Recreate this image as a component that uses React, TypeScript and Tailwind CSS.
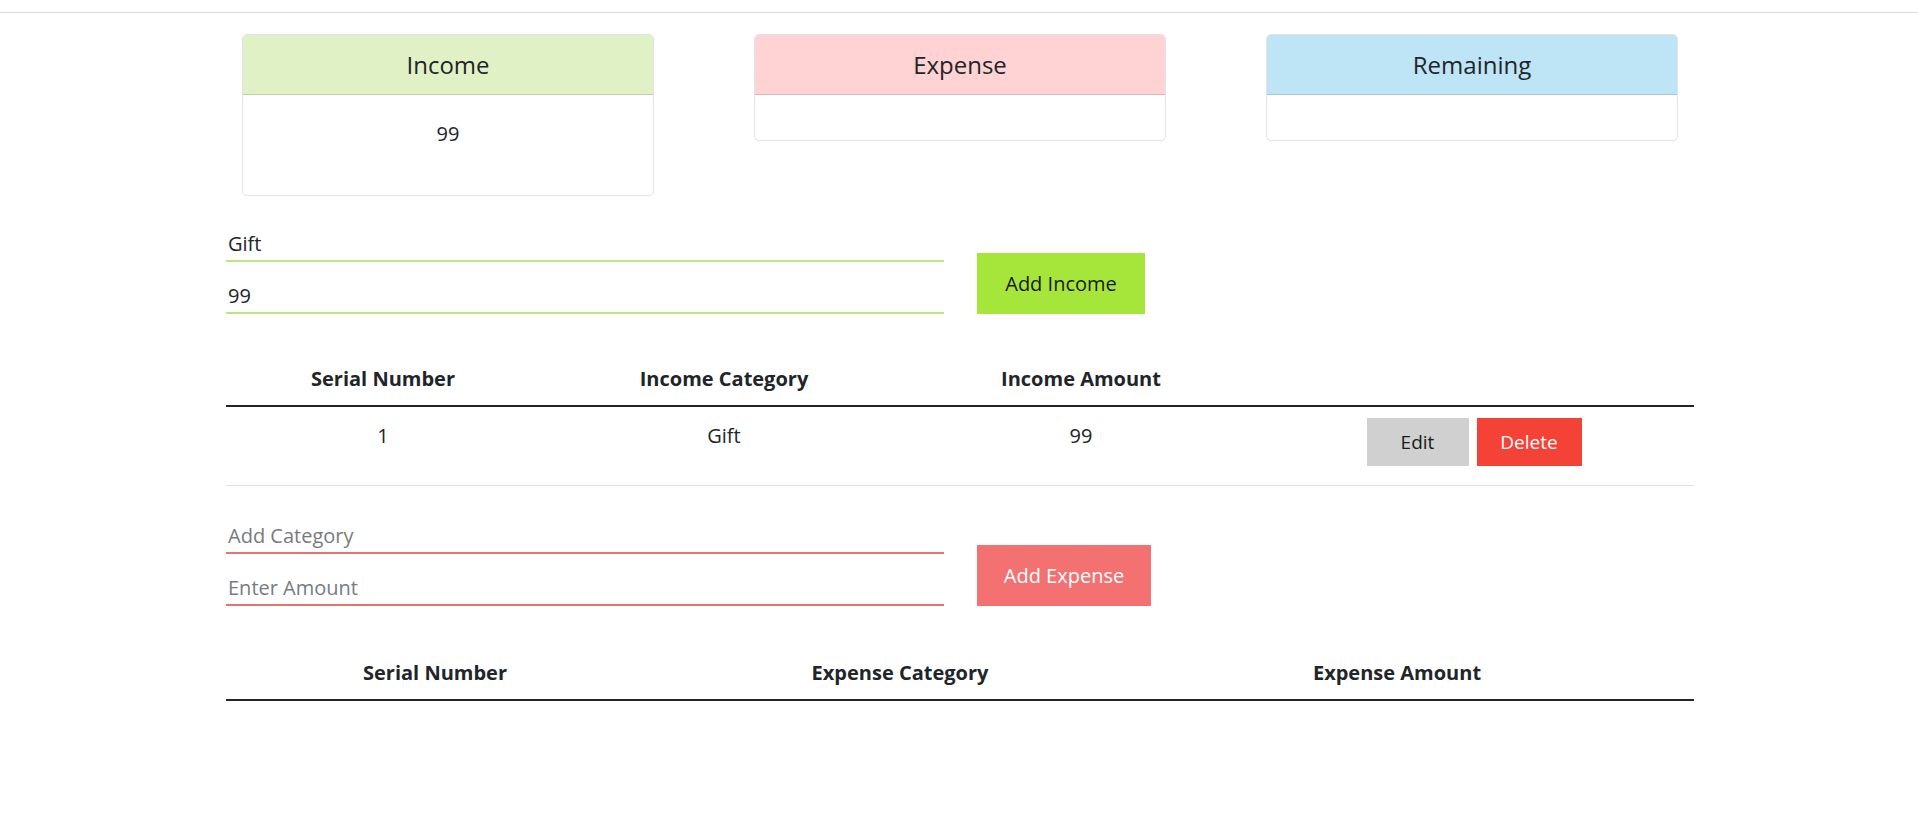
import React from "react";

/* ---- Summary cards ---- */

function SummaryCard({ title, head, value, bodyH }: { title: string; head: string; value?: string; bodyH: string }) {
  return (
    <div className="w-[412px] rounded-[5px] border border-[#dfe2e6] overflow-hidden bg-white">
      <div className={`h-[60px] flex items-center justify-center border-b border-[rgba(0,0,0,0.13)] ${head}`}>
        <span className="text-[24px] text-[#212529]">{title}</span>
      </div>
      <div className={`${bodyH} text-center pt-[24px] leading-[30px] text-[20px] text-[#212529]`}>{value}</div>
    </div>
  );
}

/* ---- Form with two underlined inputs and a button ---- */

function EntryForm({
  cat,
  amt,
  line,
  button,
  buttonCls,
}: {
  cat: string;
  amt: string;
  line: string;
  button: string;
  buttonCls: string;
}) {
  const inputCls = `block w-[718px] h-[36px] pl-[2px] border-b-2 ${line} text-[20px] text-[#212529] outline-none bg-transparent placeholder:text-[#777b80]`;
  return (
    <div className="flex items-end gap-[33px]">
      <div className="flex flex-col gap-[16px]">
        <input className={inputCls} defaultValue={cat} placeholder="Add Category" />
        <input className={inputCls} defaultValue={amt} placeholder="Enter Amount" />
      </div>
      <button className={`h-[61px] text-[20px] ${buttonCls}`}>{button}</button>
    </div>
  );
}

export default function App() {
  return (
    <div className="min-h-screen bg-white font-['Open_Sans','Noto_Sans',sans-serif] text-[#212529]">
      <div className="h-[13px] border-b border-[#dcdcdc]" />

      <div className="w-[1468px] mx-auto translate-x-[1px]">
        {/* cards */}
        <div className="flex justify-between items-start px-[16px] pt-[21px]">
          <SummaryCard title="Income" head="bg-[#e0f2c5]" value="99" bodyH="h-[100px]" />
          <SummaryCard title="Expense" head="bg-[#ffd3d4]" bodyH="h-[45px]" />
          <SummaryCard title="Remaining" head="bg-[#bee5f6]" bodyH="h-[45px]" />
        </div>

        {/* income form */}
        <div className="pt-[30px]">
          <EntryForm
            cat="Gift"
            amt="99"
            line="border-[#bfe67c]"
            button="Add Income"
            buttonCls="w-[168px] bg-[#a6e63b] text-[#1a1a1a]"
          />
        </div>

        {/* income table */}
        <div className="mt-[39px]">
          <div className="grid grid-cols-[314px_368px_346px_1fr] h-[54px] items-center text-center text-[20px] font-bold border-b-2 border-[#212529]">
            <div>Serial Number</div>
            <div>Income Category</div>
            <div>Income Amount</div>
            <div />
          </div>
          <div className="grid grid-cols-[314px_368px_346px_1fr] h-[79px] items-start pt-[11px] text-center text-[20px] border-b border-[#dee2e6]">
            <div className="pt-[3px] leading-[30px]">1</div>
            <div className="pt-[3px] leading-[30px]">Gift</div>
            <div className="pt-[3px] leading-[30px]">99</div>
            <div className="flex justify-center gap-[8px]">
              <button className="w-[102px] h-[48px] bg-[#d0d0d0] text-[#1a1a1a] text-[19px]">Edit</button>
              <button className="w-[105px] h-[48px] bg-[#f44336] text-white text-[19px]">Delete</button>
            </div>
          </div>
        </div>

        {/* expense form */}
        <div className="pt-[32px]">
          <EntryForm
            cat=""
            amt=""
            line="border-[#e57373]"
            button="Add Expense"
            buttonCls="w-[174px] bg-[#f47171] text-white"
          />
        </div>

        {/* expense table */}
        <div className="mt-[41px]">
          <div className="grid grid-cols-[418px_512px_482px_1fr] h-[54px] items-center text-center text-[20px] font-bold border-b-2 border-[#212529]">
            <div>Serial Number</div>
            <div>Expense Category</div>
            <div>Expense Amount</div>
            <div />
          </div>
        </div>
      </div>
    </div>
  );
}
